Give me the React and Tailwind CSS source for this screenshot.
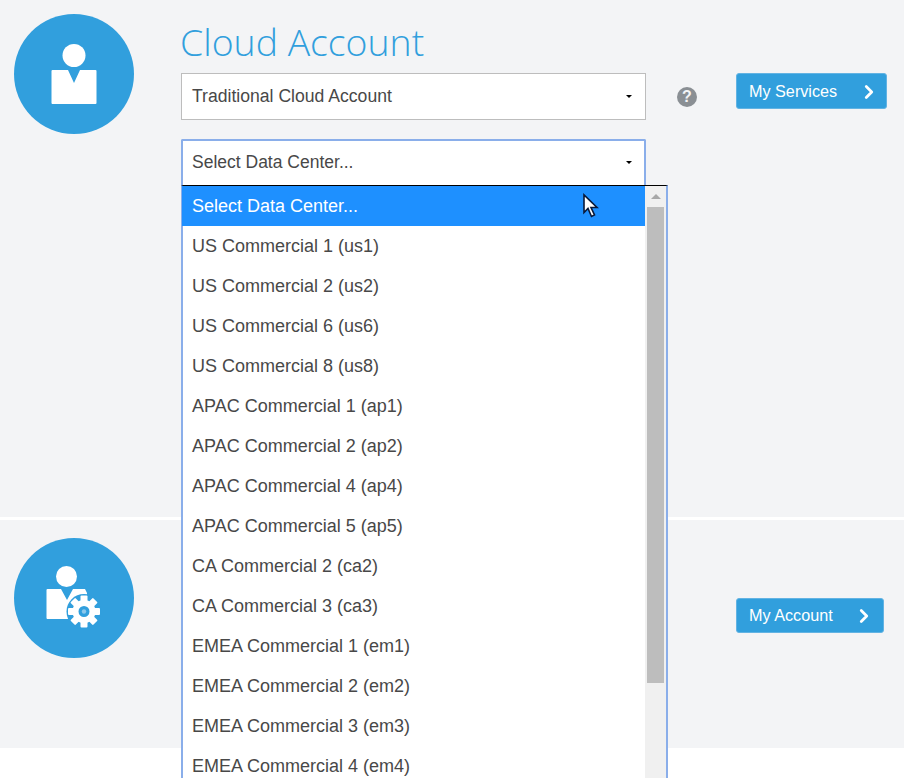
import { ChevronRight } from 'lucide-react';

const centers = [
  'Select Data Center...',
  'US Commercial 1 (us1)',
  'US Commercial 2 (us2)',
  'US Commercial 6 (us6)',
  'US Commercial 8 (us8)',
  'APAC Commercial 1 (ap1)',
  'APAC Commercial 2 (ap2)',
  'APAC Commercial 4 (ap4)',
  'APAC Commercial 5 (ap5)',
  'CA Commercial 2 (ca2)',
  'CA Commercial 3 (ca3)',
  'EMEA Commercial 1 (em1)',
  'EMEA Commercial 2 (em2)',
  'EMEA Commercial 3 (em3)',
  'EMEA Commercial 4 (em4)',
];

function PersonIcon() {
  return (
    <svg width="120" height="120" viewBox="0 0 120 120">
      <circle cx="60" cy="41.500" r="11.500" fill="#fff" />
      <path d="M38.500 56H54L60 69L66 56H81.500a1 1 0 0 1 1 1V89a1 1 0 0 1-1 1H38.500a1 1 0 0 1-1-1V57a1 1 0 0 1 1-1Z" fill="#fff" />
    </svg>
  );
}

function PersonGearIcon() {
  const teeth = [0, 45, 90, 135, 180, 225, 270, 315];
  return (
    <svg width="120" height="120" viewBox="0 0 120 120">
      <circle cx="52.500" cy="38.500" r="10.500" fill="#fff" />
      <path d="M33.500 51H47L53 62L59 51H71L73 55V61L64 70L56 82V81H33.500a1 1 0 0 1-1-1V52a1 1 0 0 1 1-1Z" fill="#fff" />
      <circle cx="70" cy="73.500" r="17.500" fill="#319fdd" />
      {teeth.map((a) => (
        <rect key={a} x="66.500" y="57.500" width="7" height="8" rx="1" fill="#fff" transform={`rotate(${a} 70 73.500)`} />
      ))}
      <circle cx="70" cy="73.500" r="8.500" fill="none" stroke="#fff" strokeWidth="6" />
      <circle cx="70" cy="73.500" r="2.200" fill="#8cc8ec" />
    </svg>
  );
}

function Caret() {
  return <span className="w-0 h-0 border-x-[3px] border-x-transparent border-t-[3px] border-t-black" />;
}

function ActionButton({ label, className }) {
  return (
    <button className={`flex items-center pl-[12px] bg-[#319fdd] border border-[#62b3e3] rounded-[3px] text-white text-[16.200px] leading-none ${className}`}>
      <span>{label}</span>
      <ChevronRight size={22} strokeWidth={3} />
    </button>
  );
}

export default function App() {
  return (
    <div className="h-[778px] overflow-hidden bg-white text-[#484848] font-['Liberation_Sans',Arial,sans-serif]">
      <section className="flex h-[517px] bg-[#f3f4f6]">
        <div className="w-[120px] h-[120px] ml-[14px] mt-[14px] rounded-full bg-[#319fdd] shrink-0">
          <PersonIcon />
        </div>
        <div className="w-[465px] ml-[47px] shrink-0">
          <h1 className="h-[73px] pt-[16px] -ml-[1px] text-[37.400px] leading-[52px] font-light text-[#319fdd] font-['Open_Sans',sans-serif]">
            Cloud Account
          </h1>
          <div className="flex items-center justify-between h-[47px] pl-[10px] pr-[13px] bg-white border border-[#bdbdbd] text-[17.600px]">
            <span>Traditional Cloud Account</span>
            <Caret />
          </div>
          <div className="relative mt-[19px]">
            <div className="flex items-center justify-between h-[46px] pl-[9px] pr-[12px] pb-[2px] bg-white border-2 border-[#8aaeea] border-b-0 rounded-t-[2px] text-[17.500px]">
              <span>Select Data Center...</span>
              <Caret />
            </div>
            <div className="absolute left-0 top-full flex w-[487px] h-[620px] bg-white border-x-2 border-x-[#8aaeea] border-t border-t-black text-[18px]">
              <ul className="w-[463px] -ml-[1px] shrink-0">
                {centers.map((name, i) => (
                  <li key={name} className={`flex items-center h-[40px] pl-[10px] ${i === 0 ? 'bg-[#1e90ff] text-white' : ''}`}>
                    {name}
                  </li>
                ))}
              </ul>
              <div className="flex-1 bg-[#f0f0f0] px-[2px]">
                <div className="h-[21px] flex items-center justify-center">
                  <span className="w-0 h-0 border-x-[5px] border-x-transparent border-b-[5px] border-b-[#a8a8a8]" />
                </div>
                <div className="h-[476px] bg-[#bdbdbd]" />
              </div>
              <svg className="absolute left-[399px] top-[7px]" width="18" height="26" viewBox="0 0 18 26">
                <path d="M2 2V19.500L6 15.500L9.500 23.500L12.500 22L9 14.500H15Z" fill="#fff" stroke="#0a1a3a" strokeWidth="1.600" />
              </svg>
            </div>
          </div>
        </div>
        <div className="ml-[31px] mt-[87px] flex items-center justify-center w-[20px] h-[20px] rounded-full bg-[#8a8f94] text-[#f3f4f6] text-[16px] font-bold leading-none shrink-0">
          ?
        </div>
        <div className="ml-[39px] mt-[73px]">
          <ActionButton label="My Services" className="w-[151px] h-[36px] gap-[21px] pt-[1px]" />
        </div>
      </section>
      <section className="flex mt-[3px] h-[228px] bg-[#f3f4f6]">
        <div className="w-[120px] h-[120px] ml-[14px] mt-[18px] rounded-full bg-[#319fdd] shrink-0">
          <PersonGearIcon />
        </div>
        <div className="ml-[602px] mt-[78px]">
          <ActionButton label="My Account" className="w-[148px] h-[35px] gap-[20px]" />
        </div>
      </section>
    </div>
  );
}
